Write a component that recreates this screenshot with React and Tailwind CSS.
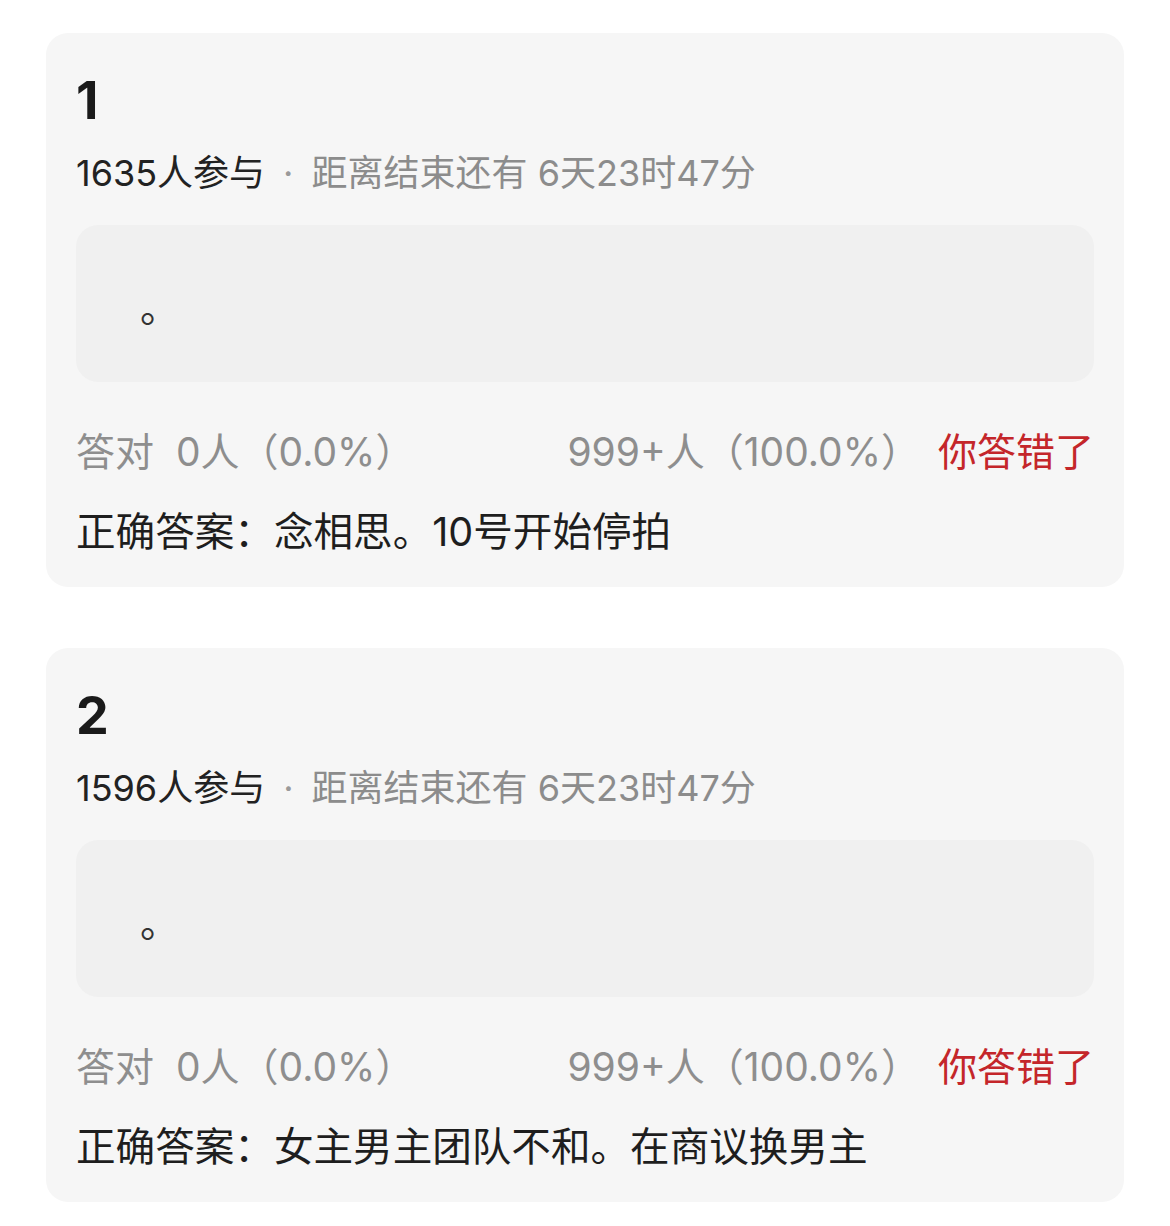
import React from 'react';

const questions = [
    {
        no: 1,
        joined: 1635,
        left: '6天23时47分',
        body: '。',
        right: '0人（0.0%）',
        wrong: '999+人（100.0%）',
        answer: '正确答案：念相思。10号开始停拍',
    },
    {
        no: 2,
        joined: 1596,
        left: '6天23时47分',
        body: '。',
        right: '0人（0.0%）',
        wrong: '999+人（100.0%）',
        answer: '正确答案：女主男主团队不和。在商议换男主',
    },
];

const QuizCard = ({ q }) => (
    <div className="bg-[#f6f6f6] rounded-[22px] pt-[38px] pb-[30px] px-[30px] flex flex-col">
        {/* question number */}
        <div className="text-[52px] leading-[60px] font-bold text-[#1a1a1a]">{q.no}</div>

        {/* participants + countdown */}
        <div className="mt-[17px] flex items-center text-[36px] leading-[50px] whitespace-nowrap">
            <span className="text-[#222222]">{q.joined}人参与</span>
            <span className="px-[18px] text-[#9a9a9a]">·</span>
            <span className="text-[#8c8c8c]">距离结束还有 {q.left}</span>
        </div>

        {/* question body */}
        <div className="mt-[27px] h-[157px] rounded-[22px] bg-[#f0f0f0] flex items-center pl-[64px] pt-[8px]">
            <span className="text-[39px] leading-[50px] text-[#333333]">{q.body}</span>
        </div>

        {/* result stats */}
        <div className="mt-[45px] flex items-center justify-between text-[39px] leading-[50px] whitespace-nowrap">
            <div className="flex items-center gap-[22px] text-[#8e8e8e]">
                <span>答对</span>
                <span>{q.right}</span>
            </div>
            <div className="flex items-center gap-[18px]">
                <span className="text-[#8e8e8e]">{q.wrong}</span>
                <span className="text-[#c4262a]">你答错了</span>
            </div>
        </div>

        <div className="mt-[30px] text-[39.6px] leading-[50px] text-[#1e1e1e] whitespace-nowrap">{q.answer}</div>
    </div>
);

export default function App() {
    return (
        <div
            className="w-[1170px] h-[1226px] bg-white pt-[33px] px-[46px] flex flex-col gap-[61px] overflow-hidden"
            style={{ fontFamily: 'Inter, "Noto Sans CJK SC", sans-serif' }}
        >
            {questions.map((q) => (
                <QuizCard key={q.no} q={q} />
            ))}
        </div>
    );
}
